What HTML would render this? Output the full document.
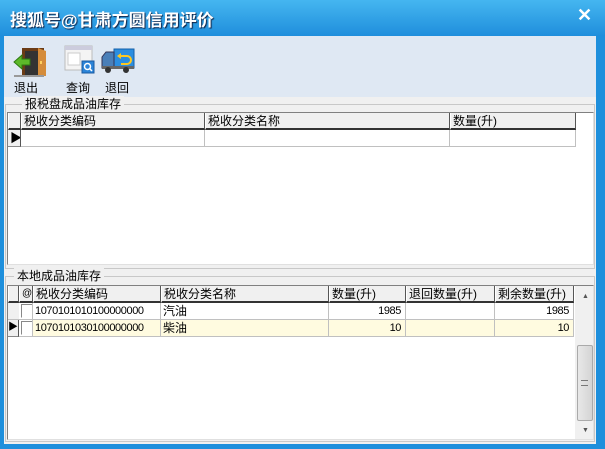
<!DOCTYPE html>
<html><head><meta charset="utf-8"><style>
*{margin:0;padding:0;box-sizing:border-box}
body{width:605px;height:449px;overflow:hidden;background:#1e8fdc;font-family:"Liberation Sans","Noto Sans CJK SC","WenQuanYi Zen Hei",sans-serif;font-size:12px;color:#000;position:relative}
.a{position:absolute}
.title{left:0;top:0;width:605px;height:36px;background:linear-gradient(#45b6f0,#1f8edc)}
.title span{position:absolute;left:10px;top:6px;font-size:17px;font-weight:bold;color:#fff;text-shadow:1px 1px 1px #124}
.close{left:577px;top:5px;color:#fff;font-size:18px;font-weight:bold}
.client{left:4px;top:36px;width:592px;height:408px;background:#f0f0f0}
.tool{left:4px;top:36px;width:592px;height:61px;background:#dfe8f3}
.lbl{font-size:12px}
.grp{border:1px solid #c8c8c8}
.grid{background:#fff;border:1px solid #808080;border-right:1px solid #e0e0e0;border-bottom:1px solid #e0e0e0;overflow:hidden}
.c{position:absolute;height:17px;line-height:16px;padding-left:2px;white-space:nowrap;font-size:12px;overflow:hidden}
.n{font-size:11px;letter-spacing:-0.4px}
.h{background:#f0f0f0;border-right:1px solid #555;border-bottom:2px solid #333;border-left:1px solid #fff}
.d{border-right:1px solid #c0c0c0;border-bottom:1px solid #c0c0c0}
.r{text-align:right;padding-right:4px}
</style></head><body>
<div class="a title"><span>搜狐号@甘肃方圆信用评价</span></div>
<div class="a close">✕</div>
<div class="a client"></div>
<div class="a tool"></div>
<svg class="a" style="left:12px;top:46px" width="36" height="32" viewBox="0 0 36 32">
<rect x="10" y="2" width="22" height="28" fill="#6b3c16"/><rect x="13" y="5" width="16" height="24" fill="#333"/>
<polygon points="26,2 34,5 34,30 26,30" fill="#d58c3a"/><rect x="28" y="15" width="2" height="3" fill="#ffd060"/>
<polygon points="2,16 10,9 10,13 18,13 18,19 10,19 10,23" fill="#5cb82a" stroke="#2d7a10"/>
<rect x="2" y="29" width="30" height="2" fill="#999"/></svg>
<svg class="a" style="left:64px;top:45px" width="32" height="30" viewBox="0 0 32 30">
<rect x="1" y="1" width="27" height="24" fill="#f4f4f4" stroke="#bbb"/><rect x="1" y="1" width="27" height="4" fill="#ccd"/>
<rect x="4" y="8" width="12" height="12" fill="#fff" stroke="#ccc"/>
<rect x="18" y="16" width="12" height="12" fill="#2b84d8" stroke="#1a5aa0"/><circle cx="23.5" cy="21.5" r="3" fill="none" stroke="#fff" stroke-width="1.5"/><line x1="25.5" y1="23.5" x2="28" y2="26" stroke="#fff" stroke-width="1.5"/></svg>
<svg class="a" style="left:100px;top:47px" width="36" height="28" viewBox="0 0 36 28">
<rect x="14" y="2" width="20" height="19" fill="#2b8ee0" stroke="#1660a8"/><path d="M19 9 h8 a4 4 0 0 1 0 8 h-6" fill="none" stroke="#ffc820" stroke-width="2"/><polygon points="17,9 21,6 21,12" fill="#ffc820"/>
<path d="M2 21 V10 l4 -5 h8 v16 z" fill="#4a7fb8" stroke="#335"/><rect x="2" y="19" width="32" height="3" fill="#666"/>
<circle cx="8" cy="23" r="3" fill="#333"/><circle cx="26" cy="23" r="3" fill="#333"/></svg>
<div class="a lbl" style="left:14px;top:79px">退出</div>
<div class="a lbl" style="left:66px;top:79px">查询</div>
<div class="a lbl" style="left:105px;top:79px">退回</div>

<div class="a grp" style="left:5px;top:104px;width:590px;height:165px"></div>
<div class="a" style="left:22px;top:96px;background:#f0f0f0;padding:0 3px;line-height:16px">报税盘成品油库存</div>
<div class="a grid" style="left:7px;top:112px;width:587px;height:153px">
<div class="c h" style="left:0;top:0;width:13px"></div>
<div class="c h" style="left:13px;top:0;width:184px">税收分类编码</div>
<div class="c h" style="left:197px;top:0;width:245px">税收分类名称</div>
<div class="c h" style="left:442px;top:0;width:126px">数量(升)</div>
<div class="c" style="left:0;top:17px;width:13px;background:#f0f0f0;border-right:1px solid #555;border-bottom:1px solid #888">▶</div>
<div class="c d" style="left:13px;top:17px;width:184px"></div>
<div class="c d" style="left:197px;top:17px;width:245px"></div>
<div class="c d" style="left:442px;top:17px;width:126px"></div>
</div>

<div class="a grp" style="left:5px;top:276px;width:590px;height:166px"></div>
<div class="a" style="left:14px;top:268px;background:#f0f0f0;padding:0 3px;line-height:16px">本地成品油库存</div>
<div class="a grid" style="left:7px;top:285px;width:587px;height:155px">
<div class="c h" style="left:0;top:0;width:11px"></div>
<div class="c h" style="left:11px;top:0;width:14px;font-size:10px">@</div>
<div class="c h" style="left:25px;top:0;width:128px">税收分类编码</div>
<div class="c h" style="left:153px;top:0;width:168px">税收分类名称</div>
<div class="c h" style="left:321px;top:0;width:77px">数量(升)</div>
<div class="c h" style="left:398px;top:0;width:89px">退回数量(升)</div>
<div class="c h" style="left:487px;top:0;width:79px">剩余数量(升)</div>
<div class="c" style="left:0;top:17px;width:11px;height:17px;background:#f0f0f0;border-bottom:1px solid #c0c0c0"></div>
<div class="c d" style="left:11px;top:17px;width:14px"><div style="margin:1px 0 0 0;width:12px;height:14px;border:1px solid #888;border-right-color:#fff;border-bottom-color:#fff;background:#fff"></div></div>
<div class="c d n" style="left:25px;top:17px;width:128px">1070101010100000000</div>
<div class="c d" style="left:153px;top:17px;width:168px">汽油</div>
<div class="c d r n" style="left:321px;top:17px;width:77px">1985</div>
<div class="c d" style="left:398px;top:17px;width:89px"></div>
<div class="c d r n" style="left:487px;top:17px;width:79px">1985</div>
<div class="c" style="left:0;top:34px;width:11px;background:#f0f0f0;border-right:1px solid #555;border-bottom:1px solid #888;font-size:10px;padding-left:0">▶</div>
<div class="c d" style="left:11px;top:34px;width:14px"><div style="margin:1px 0 0 0;width:12px;height:14px;border:1px solid #888;border-right-color:#fff;border-bottom-color:#fff;background:#fff"></div></div>
<div class="c d n" style="left:25px;top:34px;width:128px;background:#fffbe0">1070101030100000000</div>
<div class="c d" style="left:153px;top:34px;width:168px;background:#fffbe0">柴油</div>
<div class="c d r n" style="left:321px;top:34px;width:77px;background:#fffbe0">10</div>
<div class="c d" style="left:398px;top:34px;width:89px;background:#fffbe0"></div>
<div class="c d r n" style="left:487px;top:34px;width:79px;background:#fffbe0">10</div>
<div class="a" style="left:567px;top:0;width:20px;height:155px;background:#f0f0f0">
<div class="a" style="left:7px;top:7px;font-size:7px;color:#555">▲</div>
<div class="a" style="left:2px;top:59px;width:16px;height:76px;background:linear-gradient(90deg,#e8e8e8,#d4d4d4);border:1px solid #aaa;border-radius:2px"></div>
<div class="a" style="left:6px;top:94px;width:7px;height:6px;border-top:1px solid #777;border-bottom:1px solid #777"></div>
<div class="a" style="left:7px;top:141px;font-size:7px;color:#555">▼</div>
</div>
</div>
</body></html>
